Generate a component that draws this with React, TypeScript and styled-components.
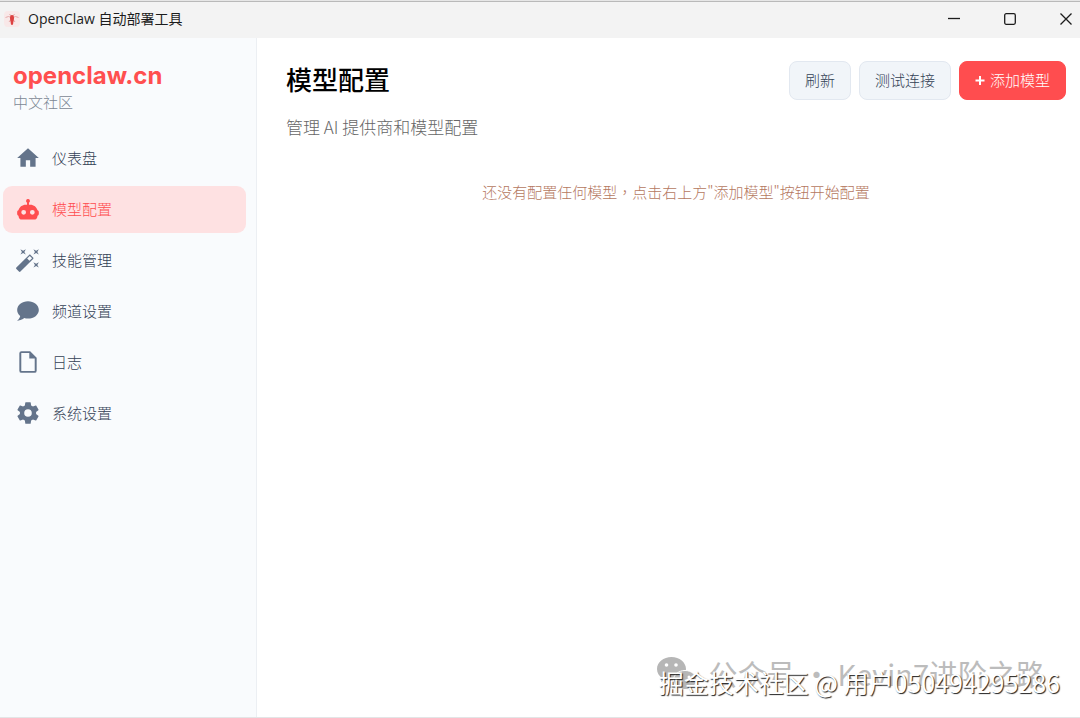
import React from "react";
import styled, { createGlobalStyle } from "styled-components";

const sans = '"Noto Sans CJK SC", sans-serif';

const GlobalStyle = createGlobalStyle`
  *, *::before, *::after { box-sizing: border-box; }
  body { margin: 0; background: #ffffff; font-family: ${sans}; font-weight: 300; }
  h1, p { margin: 0; }
  button { font: inherit; cursor: pointer; }
`;

const Window = styled.div`
  position: relative;
  display: flex;
  flex-direction: column;
  min-height: 100vh;
  border-bottom: 1px solid #e3e5e6;
`;

const TitleBar = styled.header`
  display: flex;
  align-items: center;
  height: 38px;
  flex: none;
  padding-left: 4px;
  background: #f3f3f3;
  box-shadow: inset 0 1px #e6e6e6, inset 0 2px #b9b9b9;
`;

const TitleText = styled.span`
  flex: 1;
  margin-left: 8px;
  font-family: "Open Sans", ${sans};
  font-size: 14px;
  line-height: 20px;
  font-weight: 400;
  color: #1c1c1c;
`;

const WindowControls = styled.div`
  display: flex;
  gap: 28px;
`;

const ControlButton = styled.button`
  display: grid;
  place-items: center;
  width: 28px;
  height: 34px;
  padding: 0;
  border: 0;
  background: transparent;
  svg { fill: none; stroke: #1c1c1c; stroke-width: 1.3; }
`;

const Body = styled.div`
  display: flex;
  flex: 1;
`;

const Sidebar = styled.aside`
  flex: none;
  width: 257px;
  padding: 24px 10px 24px 3px;
  background: #f9fbfd;
  border-right: 1px solid #eceff3;
`;

const Brand = styled.div`
  padding: 0 10px;
  margin-bottom: 21px;
`;

const BrandName = styled.a`
  display: block;
  font-family: Inter, sans-serif;
  font-size: 24px;
  line-height: 28px;
  font-weight: 700;
  color: #ff4f4f;
  text-decoration: none;
`;

const BrandNote = styled.p`
  font-size: 15px;
  line-height: 24px;
  color: #7c8794;
`;

const Nav = styled.nav`
  display: flex;
  flex-direction: column;
  gap: 4px;
`;

const NavItem = styled.a<{ $active?: boolean }>`
  display: flex;
  align-items: center;
  gap: 11px;
  height: 47px;
  padding: 0 12px 2px;
  border-radius: 9px;
  font-size: 15px;
  line-height: 24px;
  text-decoration: none;
  color: ${(p) => (p.$active ? "#ff4d4f" : "#334155")};
  background: ${(p) => (p.$active ? "#fee1e2" : "transparent")};
  svg { fill: ${(p) => (p.$active ? "#ff4d4f" : "#64748b")}; }
`;

const Main = styled.main`
  flex: 1;
  min-width: 0;
  padding: 23px 14px 24px 29px;
`;

const PageHeader = styled.div`
  display: flex;
  align-items: flex-start;
  justify-content: space-between;
`;

const PageTitle = styled.h1`
  font-size: 26px;
  line-height: 36px;
  font-weight: 500;
  color: #000000;
`;

const Actions = styled.div`
  display: flex;
  gap: 8px;
`;

const ActionButton = styled.button<{ $primary?: boolean }>`
  display: flex;
  align-items: center;
  gap: 5px;
  height: 39px;
  padding: 0 15px 2px;
  border-radius: 8px;
  font-size: 15px;
  line-height: 24px;
  border: 1px solid ${(p) => (p.$primary ? "#ff4d4f" : "#e2e8f0")};
  background: ${(p) => (p.$primary ? "#ff4d4f" : "#f1f5f9")};
  color: ${(p) => (p.$primary ? "#ffffff" : "#334155")};
`;

const Subtitle = styled.p`
  margin-top: 15px;
  font-size: 17px;
  line-height: 24px;
  color: #666666;
`;

const EmptyState = styled.p`
  margin-top: 41px;
  text-align: center;
  font-family: "Noto Sans CJK TC", sans-serif;
  font-size: 15px;
  line-height: 24px;
  color: #b5785f;
`;

const Watermark = styled.div`
  position: absolute;
  right: 20px;
  bottom: 19px;
  font-size: 25px;
  line-height: 32px;
  font-weight: 400;
  white-space: nowrap;
  color: #ffffff;
  text-shadow: 1px 1px 1px #222222;
`;

const AccountMark = styled.div`
  position: absolute;
  right: 35px;
  bottom: 26px;
  display: flex;
  align-items: center;
  gap: 10px;
  font-size: 29px;
  line-height: 36px;
  font-weight: 400;
  white-space: nowrap;
  color: #bcbcbc;
`;

const items = [
  { label: "仪表盘", d: "M10 20v-6h4v6h5v-8h3L12 3 2 12h3v8z" },
  {
    label: "模型配置",
    active: true,
    d: "M12 2.800a1.800 1.800 0 0 1 .9 3.360V8H14c3.400 0 6.100 2.200 6.800 5.200 .8.3 1.200 1 1.200 1.800v1.500c0 .8-.5 1.400-1.200 1.700-.2 2.400-1.300 3.600-3.300 3.600h-11c-2 0-3.100-1.200-3.300-3.600C2.500 17.900 2 17.300 2 16.500V15c0-.8.4-1.500 1.200-1.800C3.900 10.200 6.600 8 10 8h1.100V6.160A1.800 1.800 0 0 1 12 2.800zM8 12.900a2.200 2.200 0 1 0 0 4.400a2.200 2.200 0 1 0 0-4.400zM16 12.900a2.200 2.200 0 1 0 0 4.400a2.200 2.200 0 1 0 0-4.400z",
  },
  { label: "技能管理", d: "M7.500 5.600L5 7l1.400-2.500L5 2l2.500 1.400L10 2 8.600 4.500 10 7zM19.500 15.400L22 14l-1.400 2.500L22 19l-2.500-1.400L17 19l1.400-2.500L17 14zM22 2l-1.400 2.500L22 7l-2.500-1.400L17 7l1.400-2.500L17 2l2.500 1.400zM13.340 12.780l2.440-2.440-2.120-2.120-2.440 2.440zM14.370 7.290l2.340 2.340c.39.37.39 1.020 0 1.410L5.040 22.710c-.39.39-1.040.39-1.410 0l-2.340-2.340c-.39-.37-.39-1.020 0-1.410L12.960 7.290c.39-.39 1.040-.39 1.410 0" },
  { label: "频道设置", d: "M12 3c5.500 0 10 3.580 10 8s-4.500 8-10 8c-1.240 0-2.430-.18-3.530-.5C5.550 21 2 21 2 21c2.330-2.330 2.700-3.900 2.750-4.500C3.050 15.070 2 13.130 2 11c0-4.420 4.500-8 10-8" },
  { label: "日志", d: "M14 2H6a2 2 0 0 0-2 2v16a2 2 0 0 0 2 2h12a2 2 0 0 0 2-2V8zM18.200 20.200H5.800V3.800h7.400v5h5z" },
  { label: "系统设置", d: "M12 15.500A3.500 3.500 0 0 1 8.500 12 3.500 3.500 0 0 1 12 8.500a3.500 3.500 0 0 1 3.500 3.500 3.500 3.500 0 0 1-3.500 3.500m7.430-2.530c.04-.32.07-.64.07-.97s-.03-.66-.07-1l2.110-1.630c.19-.15.24-.42.12-.64l-2-3.460c-.12-.22-.39-.31-.61-.22l-2.490 1c-.52-.39-1.060-.73-1.690-.98l-.37-2.650A.506.506 0 0 0 14 2h-4c-.25 0-.46.18-.5.42l-.37 2.650c-.63.25-1.170.59-1.690.98l-2.490-1c-.22-.09-.49 0-.61.22l-2 3.460c-.13.22-.07.49.12.64L4.570 11c-.04.34-.07.67-.07 1s.03.65.07.97l-2.110 1.660c-.19.15-.25.42-.12.64l2 3.460c.12.22.39.3.61.22l2.490-1.010c.52.4 1.060.74 1.690.99l.37 2.650c.04.24.25.42.5.42h4c.25 0 .46-.18.5-.42l.37-2.650c.63-.26 1.170-.59 1.690-.99l2.490 1.010c.22.08.49 0 .61-.22l2-3.460c.12-.22.07-.49-.12-.64z" },
];

const LobsterIcon = () => (
  <svg width="16" height="16" viewBox="0 0 16 16" aria-hidden="true">
    <rect width="16" height="16" rx="4" fill="#f8e8e8" />
    <path d="M7 6.500L4.500 5.500 1.500 6.500M9 6.500l2.500-1L14.500 6.500M7 5L5.500 3M9 5l1.500-2M6.500 9L5 11M9.500 9l1.500 2" fill="none" stroke="#e3a3a3" strokeWidth=".9" />
    <path d="M8 4c1.400 0 2 1.300 2 3 0 2.200-.7 3.600-.9 6-.2 1.200-2 1.200-2.200 0C6.700 10.600 6 9.200 6 7c0-1.700.6-3 2-3z" fill="#dd4040" />
  </svg>
);

const ChatBubblesIcon = () => (
  <svg width="42" height="36" viewBox="0 0 42 36" aria-hidden="true">
    <path d="M15.500 2C7.500 2 1 7.300 1 14c0 3.800 2 7 5.200 9.200L5 27l4.600-2.300c1.900.6 3.800.9 5.900.9C23.500 25.600 30 20.500 30 14S23.500 2 15.500 2z" fill="#b6b6b6" />
    <path d="M29 15.500c-6.400 0-11.500 4.300-11.500 9.500S22.600 34.500 29 34.500c1.600 0 3-.2 4.300-.7l3.600 1.900-1-3.100c2.800-1.700 4.600-4.500 4.600-7.600 0-5.200-5.100-9.500-11.500-9.500z" fill="#b6b6b6" stroke="#ffffff" />
    <g fill="#ffffff">
      <circle cx="10.500" cy="10" r="1.800" />
      <circle cx="20" cy="10" r="1.800" />
      <circle cx="25.500" cy="22" r="1.500" />
      <circle cx="33" cy="22" r="1.500" />
    </g>
  </svg>
);

export default function App() {
  return (
    <Window>
      <GlobalStyle />
      <TitleBar>
        <LobsterIcon />
        <TitleText>OpenClaw 自动部署工具</TitleText>
        <WindowControls>
          <ControlButton aria-label="最小化">
            <svg width="12" height="12"><path d="M0 5.500h12" /></svg>
          </ControlButton>
          <ControlButton aria-label="最大化">
            <svg width="12" height="12"><rect x=".7" y=".7" width="10.600" height="10.600" rx="1.500" /></svg>
          </ControlButton>
          <ControlButton aria-label="关闭">
            <svg width="12" height="12"><path d="M.5.5l11 11M11.500.5l-11 11" /></svg>
          </ControlButton>
        </WindowControls>
      </TitleBar>
      <Body>
        <Sidebar>
          <Brand>
            <BrandName href="#home">openclaw.cn</BrandName>
            <BrandNote>中文社区</BrandNote>
          </Brand>
          <Nav>
            {items.map((it) => (
              <NavItem key={it.label} href={"#" + it.label} $active={it.active}>
                <svg width="26" height="26" viewBox="0 0 24 24" fillRule="evenodd" aria-hidden="true"><path d={it.d} /></svg>
                {it.label}
              </NavItem>
            ))}
          </Nav>
        </Sidebar>
        <Main>
          <PageHeader>
            <PageTitle>模型配置</PageTitle>
            <Actions>
              <ActionButton>刷新</ActionButton>
              <ActionButton>测试连接</ActionButton>
              <ActionButton $primary>
                <svg width="10" height="10" viewBox="0 0 10 10" stroke="#ffffff" strokeWidth="2" aria-hidden="true"><path d="M5 1v9M.5 5.500h9" /></svg>
                添加模型
              </ActionButton>
            </Actions>
          </PageHeader>
          <Subtitle>管理 AI 提供商和模型配置</Subtitle>
          <EmptyState lang="zh-TW">{"还没有配置任何模型\uff0c点击右上方\"添加模型\"按钮开始配置"}</EmptyState>
        </Main>
      </Body>
      <AccountMark>
        <ChatBubblesIcon />
        公众号 · Kevin7进阶之路
      </AccountMark>
      <Watermark>掘金技术社区 @ 用户050494295286</Watermark>
    </Window>
  );
}
